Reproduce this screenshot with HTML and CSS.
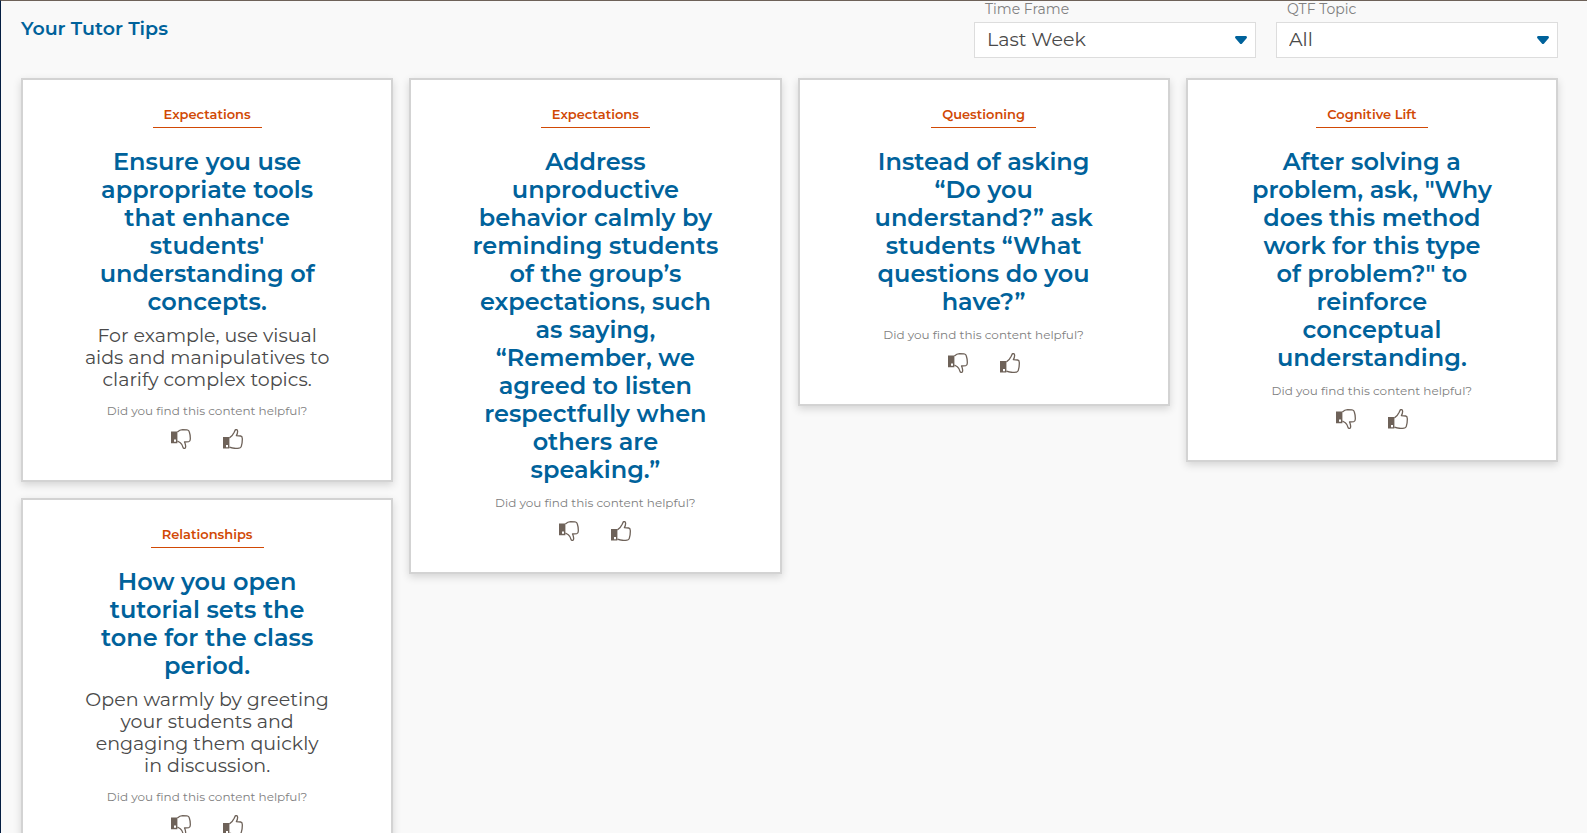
FILE: index.html
```html
<!DOCTYPE html>
<html lang="en">
<head>
    <meta charset="UTF-8">
    <meta name="viewport" content="width=device-width, initial-scale=1.0">
    <title>Your Tutor Tips</title>
    <link rel="stylesheet" href="styles.css">
</head>
<body>

    <!-- Shared icons -->
    <svg class="icon-defs" aria-hidden="true">
        <symbol id="thumb-down" viewBox="0 0 20 20">
            <path fill="currentColor" fill-rule="evenodd" d="M0 2.4h6.4v11.8H0z M3 10.6v2.1h2v-2.1z"/>
            <path fill="none" stroke="currentColor" stroke-width="1.3" stroke-linejoin="round" d="M6.4 3C8 1.5 9.6.8 11.6.7L16 .8c1.2.1 1.9.7 2.2 1.7.8 2.4 1.2 5 1.1 7.5 0 1.7-.4 2.5-1.5 2.7l-4.3.3c.9 1.7 1.3 3.4 1.1 5.2-.1.8-.6 1.2-1.3 1.2-.9 0-1.2-.5-1.4-1.3-.4-2.1-1.2-3.3-2.6-4.4L6.4 12"/>
        </symbol>
        <symbol id="thumb-up" viewBox="0 0 20 20">
            <path fill="currentColor" fill-rule="evenodd" d="M0 8h6.4v11.6H0z M3 16v2.2h2V16z"/>
            <path fill="none" stroke="currentColor" stroke-width="1.3" stroke-linejoin="round" d="M6.4 8.8C8.5 7.7 10.2 5.5 11.2 3.3l.8-1.9C12.3.8 12.7.6 13.2.6c.9 0 1.3.6 1.4 1.4.1 1.5-.4 3.1-1.2 4.6l4.3.4c1.1.2 1.6.9 1.6 2.4.1 2.7-.2 5.4-1 8-.3 1.1-1 1.7-2.2 1.8-3.5.4-6.8.3-9.7-1"/>
        </symbol>
        <symbol id="caret" viewBox="0 0 12 8">
            <path fill="currentColor" d="M1.5 0h9c1.3 0 1.9 1.3 1.1 2.3L7.1 7.4c-.6.7-1.6.7-2.2 0L.4 2.3C-.4 1.3.2 0 1.5 0z"/>
        </symbol>
    </svg>

    <main class="tips-page">
        <header class="tips-header">
            <h1>Your Tutor Tips</h1>
            <div class="filters">
                <div class="filter">
                    <label for="time-frame">Time Frame</label>
                    <div class="select-box">
                        <select id="time-frame">
                            <option>Last Week</option>
                        </select>
                        <svg class="caret"><use href="#caret"/></svg>
                    </div>
                </div>
                <div class="filter">
                    <label for="topic">QTF Topic</label>
                    <div class="select-box">
                        <select id="topic">
                            <option>All</option>
                        </select>
                        <svg class="caret"><use href="#caret"/></svg>
                    </div>
                </div>
            </div>
        </header>

        <div class="tips">
            <div class="column">
                <article class="card">
                    <div class="topic">Expectations</div>
                    <h2>Ensure you use appropriate tools that enhance students' understanding of concepts.</h2>
                    <p class="detail">For example, use visual aids and manipulatives to clarify complex topics.</p>
                    <p class="question">Did you find this content helpful?</p>
                    <div class="votes">
                        <button type="button" aria-label="Not helpful"><svg><use href="#thumb-down"/></svg></button>
                        <button type="button" aria-label="Helpful"><svg><use href="#thumb-up"/></svg></button>
                    </div>
                </article>
                <article class="card">
                    <div class="topic">Relationships</div>
                    <h2>How you open tutorial sets the tone for the class period.</h2>
                    <p class="detail">Open warmly by greeting your students and engaging them quickly in&nbsp;discussion.</p>
                    <p class="question">Did you find this content helpful?</p>
                    <div class="votes">
                        <button type="button" aria-label="Not helpful"><svg><use href="#thumb-down"/></svg></button>
                        <button type="button" aria-label="Helpful"><svg><use href="#thumb-up"/></svg></button>
                    </div>
                </article>
            </div>

            <div class="column">
                <article class="card">
                    <div class="topic">Expectations</div>
                    <h2>Address unproductive behavior calmly by reminding students of the group’s expectations, such as saying, “Remember, we agreed to listen respectfully when others are speaking.”</h2>
                    <p class="question">Did you find this content helpful?</p>
                    <div class="votes">
                        <button type="button" aria-label="Not helpful"><svg><use href="#thumb-down"/></svg></button>
                        <button type="button" aria-label="Helpful"><svg><use href="#thumb-up"/></svg></button>
                    </div>
                </article>
            </div>

            <div class="column">
                <article class="card">
                    <div class="topic">Questioning</div>
                    <h2>Instead of asking “Do you understand?” ask students “What questions do you have?”</h2>
                    <p class="question">Did you find this content helpful?</p>
                    <div class="votes">
                        <button type="button" aria-label="Not helpful"><svg><use href="#thumb-down"/></svg></button>
                        <button type="button" aria-label="Helpful"><svg><use href="#thumb-up"/></svg></button>
                    </div>
                </article>
            </div>

            <div class="column">
                <article class="card">
                    <div class="topic">Cognitive Lift</div>
                    <h2>After solving a problem, ask, "Why does this method work for this type of&nbsp;problem?" to reinforce conceptual understanding.</h2>
                    <p class="question">Did you find this content helpful?</p>
                    <div class="votes">
                        <button type="button" aria-label="Not helpful"><svg><use href="#thumb-down"/></svg></button>
                        <button type="button" aria-label="Helpful"><svg><use href="#thumb-up"/></svg></button>
                    </div>
                </article>
            </div>
        </div>
    </main>

</body>
</html>
```
FILE: styles.css
```css
* {
    box-sizing: border-box;
}

body {
    margin: 0;
    font-family: Montserrat, Inter, sans-serif;
    background-color: #f9f9f9;
    color: #4a4a4a;
}

.icon-defs {
    display: none;
}

.tips-page {
    min-height: 100vh;
    padding: 0 29px 20px 20px;
    border-top: 1px solid #6e6259;
    border-left: 1px solid #041e42;
}

.tips-header {
    display: flex;
    justify-content: space-between;
    align-items: flex-start;
    margin-bottom: 20px;
}

h1 {
    margin: 16px 0 0;
    font-size: 19px;
    line-height: 24px;
    font-weight: 600;
    color: #00629b;
}

.filters {
    display: flex;
    gap: 20px;
}

.filter {
    width: 282px;
}

.filter label {
    display: block;
    padding: 0 11px 5px;
    font-size: 14px;
    line-height: 16px;
    color: #808080;
}

.select-box {
    position: relative;
}

.select-box select {
    display: block;
    width: 100%;
    height: 36px;
    padding: 0 30px 2px 12px;
    border: 1px solid #ddd;
    border-radius: 0;
    background-color: #fff;
    font-family: inherit;
    font-size: 19px;
    color: #4a4a4a;
    appearance: none;
}

.caret {
    position: absolute;
    right: 9px;
    top: 14px;
    width: 12px;
    height: 8px;
    color: #00629b;
    pointer-events: none;
}

.tips {
    display: flex;
    align-items: flex-start;
    gap: 16px;
}

.column {
    flex: 1;
    display: flex;
    flex-direction: column;
    gap: 16px;
}

.card {
    display: flex;
    flex-direction: column;
    align-items: center;
    padding: 26px 60px 31px;
    border: 2px solid #d3d3d3;
    background-color: #fff;
    box-shadow: 0 3px 8px rgba(0, 0, 0, 0.15);
    text-align: center;
}

.topic {
    padding: 0 11px 5px;
    border-bottom: 1px solid #d14905;
    font-size: 13px;
    line-height: 16px;
    font-weight: 600;
    color: #d14905;
}

h2 {
    margin: 20px 0 0;
    font-size: 24px;
    line-height: 28px;
    font-weight: 600;
    color: #00629b;
}

.detail {
    margin: 9px 0 1px;
    font-size: 19px;
    line-height: 22px;
}

.question {
    margin: 11px 0 10px;
    font-size: 12px;
    line-height: 16px;
    color: #808080;
}

.votes {
    display: flex;
    gap: 32px;
}

.votes button {
    padding: 0;
    border: none;
    background: none;
    color: #6e6259;
    cursor: pointer;
}

.votes svg {
    display: block;
    width: 20px;
    height: 20px;
}
```
